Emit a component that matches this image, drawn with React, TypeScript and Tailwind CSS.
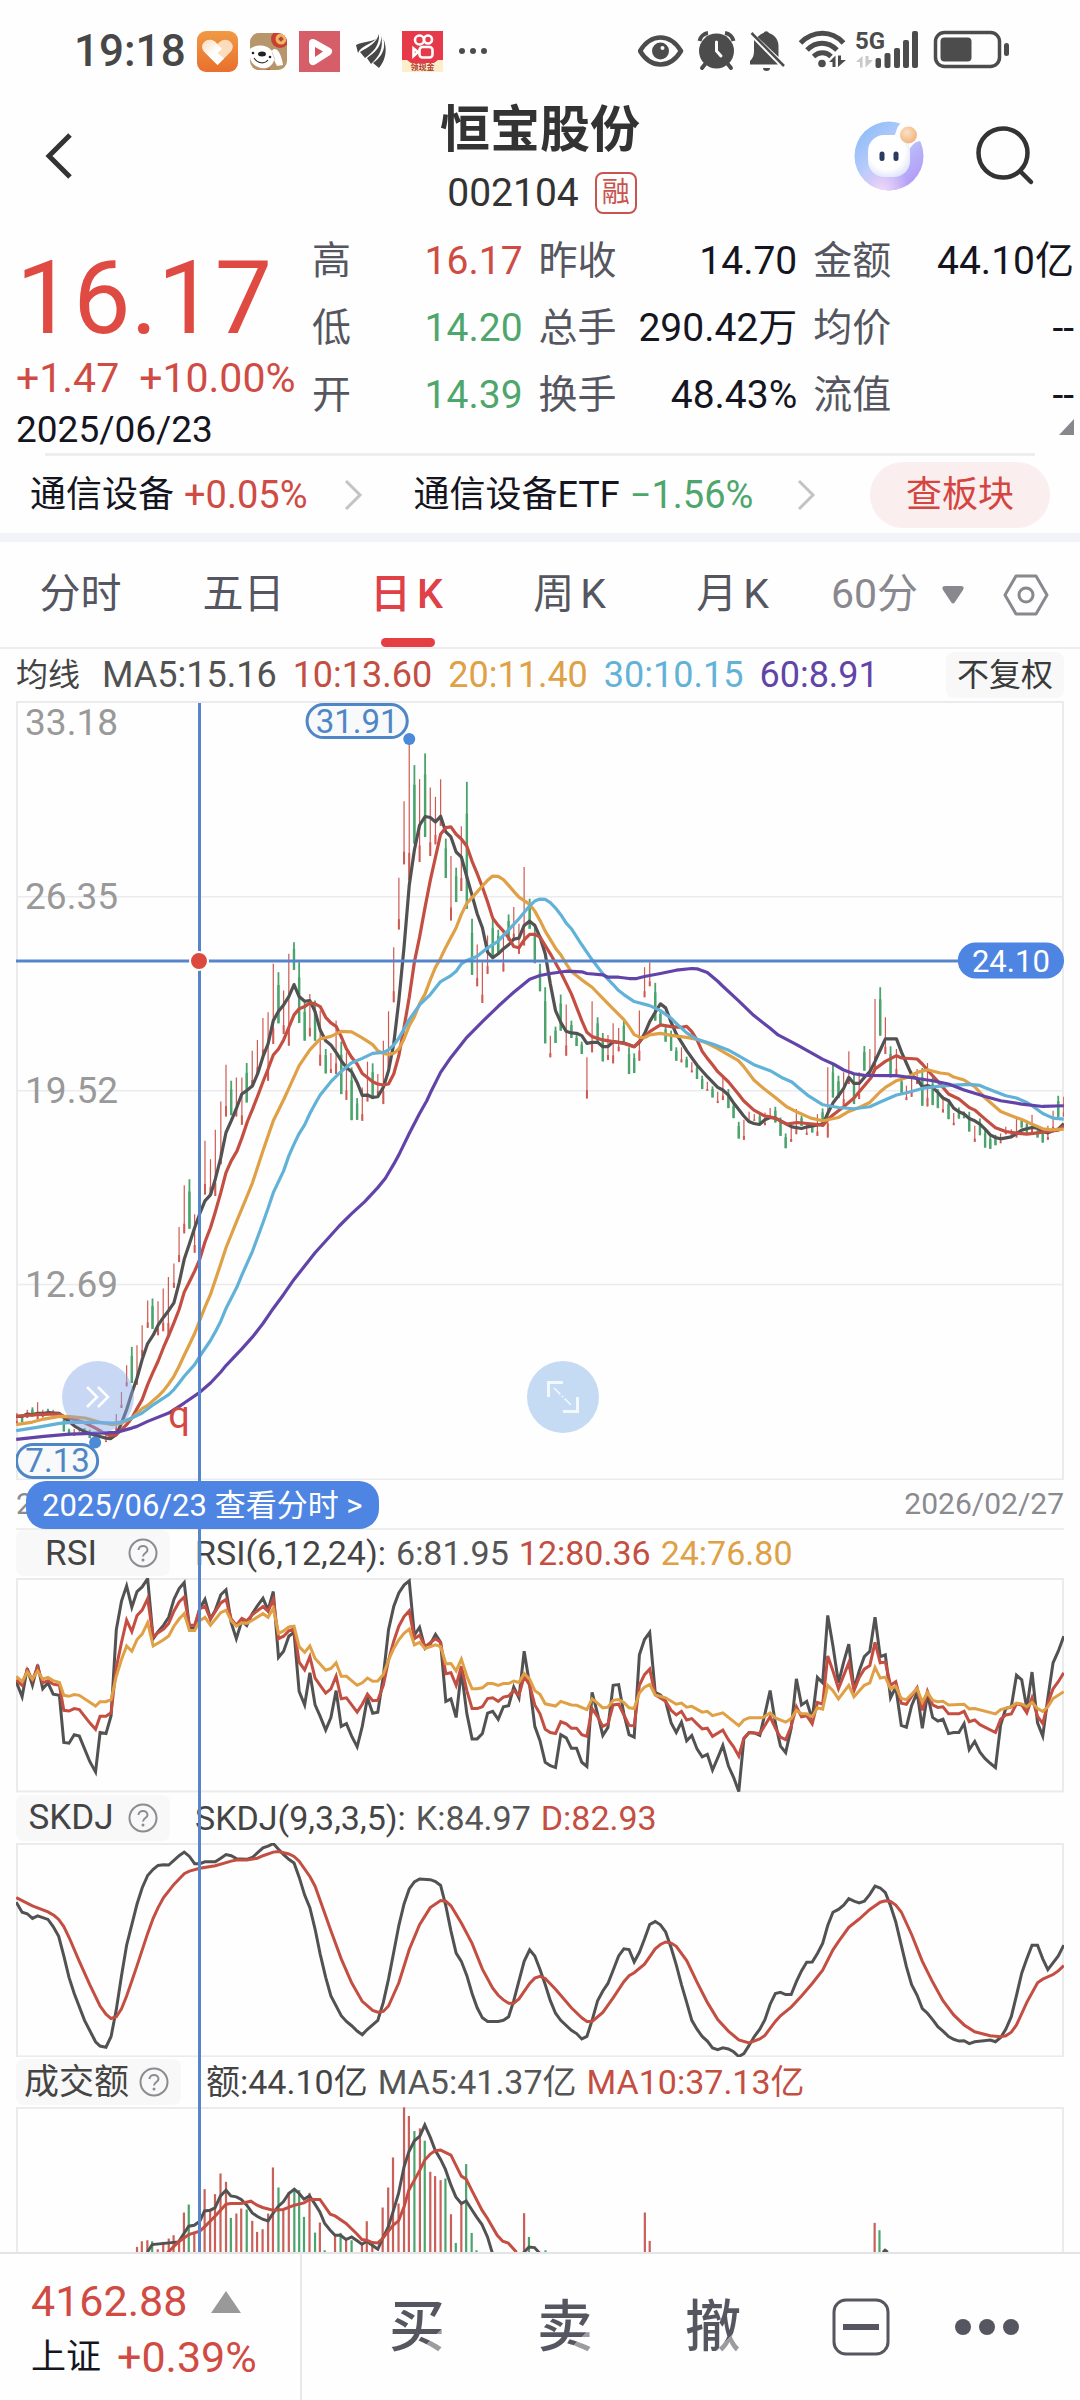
import React from "react";

/* ---------- chart data ----------
   Each series is stored as two half-width strips of "x,y" pairs. */

const HALF = 540;
const SX = 2.9037;

type Strip = { half: 0 | 1; dy?: number; pts: string };

const toPoints = (strips: Strip[], sy: number, sx = SX) =>
  strips
    .map(({ half, dy = 0, pts }) =>
      pts
        .trim()
        .split(/\s+/)
        .map((p) => {
          const [x, y] = p.split(",").map(Number);
          return `${(half * HALF + x / sx).toFixed(1)},${((y + dy) / sy).toFixed(1)}`;
        })
        .join(" ")
    )
    .join(" ");

const DARK = "#525252";
const RED = "#c34e41";
const ORANGE = "#dfa046";
const BLUE = "#62b2d8";
const PURPLE = "#6244a8";
const LOW = 1230;

const movingAverages: { color: string; strips: Strip[] }[] = [
  {
    color: DARK,
    strips: [
      { half: 0, dy: LOW, pts: "50,945 67,945 82,938 97,940 112,936 130,936 145,934 160,935 175,936 190,950 205,962 220,975 235,983 250,991 265,997 280,1002 295,1006 310,1010 323,1012 340,1000 355,965 370,925 385,875 400,830 415,775 431,727 447,702 461,672 477,648 492,628 507,605 522,545 537,475 552,428 567,380 582,338 597,300 613,282 627,235 643,170 658,95 673,60 690,18" },
      { half: 0, pts: "704,1210 720,1198 735,1185 750,1148 765,1098 780,1060 795,990 810,962 825,943 840,918 855,882 870,918 886,932 901,930 916,963 931,1018 947,1050 962,1063 977,1085 992,1110 1007,1130 1022,1143 1038,1175 1053,1214 1068,1213 1083,1220 1098,1218 1114,1190 1129,1140 1144,1060 1159,930 1174,770 1189,585 1204,480 1219,405 1235,379 1250,382 1265,395 1280,378 1295,425 1310,440 1325,485 1340,500 1356,560 1371,615 1386,670 1401,712 1416,785 1431,802 1447,790 1462,775 1477,763 1492,746 1507,743 1522,705 1538,692 1553,705" },
      { half: 1, pts: "0,740 15,790 30,880 45,960 60,995 76,1022 91,1027 106,1028 121,1035 136,1058 151,1055 167,1055 182,1068 197,1068 212,1053 228,1055 243,1057 258,1062 273,1068 288,1055 303,1030 318,993 334,965 349,940 364,952 380,995 395,1030 425,1080 455,1123 485,1158 515,1190 530,1198 546,1213 560,1235 575,1255 590,1275 605,1292 620,1298 636,1301 652,1287 667,1280 682,1282 697,1290 715,1300 730,1308 758,1313 775,1308 805,1302 820,1300 835,1265 850,1235 865,1215 880,1193 895,1160 910,1178 925,1178 940,1160 956,1143 971,1112 986,1078 1001,1045 1033,1045 1048,1085 1063,1120 1078,1155 1093,1165 1108,1188 1123,1184 1138,1190 1153,1205 1168,1222 1184,1230 1199,1252 1214,1263 1229,1270 1244,1283 1260,1290 1275,1300 1290,1315 1305,1332 1320,1340 1335,1344 1366,1338 1381,1328 1396,1318 1411,1314 1426,1310 1442,1312 1457,1322 1472,1326 1487,1320 1502,1315 1518,1298" },
    ],
  },
  {
    color: RED,
    strips: [
      { half: 0, dy: LOW, pts: "50,945 82,942 112,940 145,938 175,938 190,946 220,955 250,965 280,980 300,992 323,1003 340,1000 355,985 370,970 385,950 400,922 415,895 431,850 447,812 461,780 477,738 492,703 507,665 522,625 537,573 552,542 567,510 582,475 597,423 613,380 627,333 643,275 658,215 673,180 690,150 704,112 720,62 735,25" },
      { half: 0, pts: "750,1215 765,1173 780,1135 795,1093 810,1075 825,1048 840,1010 855,973 870,955 886,948 901,937 916,940 931,948 947,980 962,997 977,1007 992,1038 1007,1075 1022,1100 1038,1120 1053,1148 1068,1160 1083,1173 1098,1180 1114,1183 1129,1180 1144,1150 1159,1095 1174,1010 1189,920 1204,815 1219,740 1235,650 1250,570 1265,500 1280,432 1295,412 1310,410 1325,432 1340,446 1356,468 1371,513 1386,550 1401,590 1416,635 1431,683 1447,705 1462,722 1477,742 1492,768 1507,772 1522,748 1538,732 1553,732" },
      { half: 1, pts: "0,740 30,790 60,845 91,910 121,990 136,1025 151,1038 182,1048 212,1053 243,1058 273,1068 288,1052 318,1023 349,1003 380,1008 410,1010 425,1007 440,1023 455,1048 470,1082 485,1103 500,1122 515,1143 546,1173 575,1210 590,1230 620,1258 650,1275 682,1282 715,1300 745,1295 775,1298 805,1301 820,1304 835,1285 850,1272 880,1248 910,1222 940,1185 960,1160 971,1135 1001,1112 1033,1095 1048,1102 1093,1105 1108,1120 1123,1138 1138,1155 1153,1172 1184,1210 1214,1225 1244,1250 1260,1258 1290,1285 1320,1311 1350,1322 1381,1327 1411,1330 1442,1326 1472,1322 1502,1318 1518,1305" },
    ],
  },
  {
    color: ORANGE,
    strips: [
      { half: 0, dy: LOW, pts: "50,970 97,962 130,953 175,945 205,946 250,950 290,962 330,970 355,965 385,950 415,922 431,912 461,885 477,868 492,848 507,825 522,795 537,762 552,730 567,697 582,658 597,618 613,580 643,488 658,440 690,358 720,283 735,245 765,150 795,60 825,-3" },
      { half: 0, pts: "840,1193 870,1125 901,1078 931,1045 962,1037 992,1022 1022,1024 1053,1042 1083,1062 1098,1080 1114,1088 1129,1091 1144,1088 1159,1075 1174,1045 1189,1005 1204,978 1219,940 1235,910 1250,868 1265,830 1280,803 1295,770 1325,712 1340,672 1356,638 1371,622 1401,587 1416,570 1431,557 1447,558 1462,568 1477,585 1492,603 1507,620 1538,642 1553,662" },
      { half: 1, pts: "0,690 15,722 45,773 60,793 76,820 91,843 121,868 151,890 182,923 212,955 243,987 258,1008 273,1032 290,1040 303,1041 318,1033 349,1028 380,1034 425,1040 455,1046 485,1058 515,1074 545,1092 575,1110 590,1127 620,1168 650,1195 682,1220 715,1248 745,1264 785,1282 820,1290 865,1280 895,1262 925,1250 956,1235 986,1203 1001,1190 1033,1170 1063,1160 1093,1145 1123,1137 1160,1147 1184,1150 1199,1159 1229,1168 1244,1178 1260,1188 1275,1205 1290,1222 1335,1262 1366,1275 1396,1286 1426,1300 1457,1314 1480,1317 1518,1315" },
    ],
  },
  {
    color: BLUE,
    strips: [
      { half: 0, dy: LOW, pts: "50,988 110,978 175,966 220,962 265,963 330,965 355,962 385,950 415,935 450,908 492,880 507,865 522,845 537,825 567,790 582,765 613,718 627,692 643,660 658,622 690,557 704,522 735,450 765,365 780,322 795,275 825,210 840,165 855,130 870,98 886,72 901,38 920,2" },
      { half: 0, pts: "931,1213 962,1173 992,1142 1022,1116 1053,1103 1083,1088 1114,1085 1129,1078 1144,1063 1159,1043 1189,987 1219,943 1250,912 1280,873 1310,855 1325,842 1340,820 1356,810 1386,797 1416,772 1447,752 1462,735 1492,702 1507,685 1538,646 1553,632" },
      { half: 1, pts: "0,626 15,627 30,637 45,653 60,673 76,698 91,715 121,763 151,808 182,850 212,882 228,900 243,912 273,933 318,945 349,960 380,983 395,998 425,1027 455,1046 500,1060 545,1078 575,1095 620,1122 667,1140 700,1160 730,1174 745,1187 775,1213 820,1242 865,1250 910,1254 956,1248 986,1234 1033,1213 1063,1206 1108,1193 1153,1187 1199,1183 1244,1181 1275,1184 1290,1191 1350,1215 1381,1222 1411,1235 1426,1245 1457,1268 1487,1282 1518,1285" },
    ],
  },
  {
    color: PURPLE,
    strips: [
      { half: 0, dy: LOW, pts: "50,1014 130,1005 205,998 290,995 340,993 385,980 400,975 431,960 492,935 537,905 582,873 613,845 643,812 658,793 704,743 735,707 765,667 795,622 825,580 855,535 886,495 916,455 947,420 986,375 1022,338 1060,302 1098,260 1120,232 1144,190 1159,162 1189,98 1219,38 1240,0" },
      { half: 0, pts: "1250,1207 1280,1145 1310,1100 1356,1040 1401,993 1447,947 1492,905 1538,866" },
      { half: 1, pts: "0,855 30,849 76,842 121,844 136,849 182,853 197,860 228,860 258,864 280,864 303,858 349,849 395,839 440,834 455,835 485,846 515,872 530,887 575,930 620,975 667,1013 690,1033 745,1063 820,1106 850,1120 880,1138 910,1149 940,1154 1033,1155 1078,1161 1138,1170 1184,1180 1229,1198 1290,1217 1335,1230 1396,1240 1457,1247 1518,1245" },
    ],
  },
];

const candleStrips: Strip[] = [
  { half: 0, dy: LOW, pts: "52,935,965,r 67,940,963,g 82,925,950,r 97,918,945,g 112,903,955,r 127,925,948,r 142,922,940,g 157,925,940,r 188,945,990,g 203,982,1002,g 218,983,1003,r 233,978,990,r 248,980,998,g 263,985,1010,g 278,992,1005,r 310,1000,1022,r 325,995,1015,r 340,938,990,r 355,872,920,r 370,792,855,r 385,737,845,g 400,732,850,r 415,672,765,r 431,598,680,r 445,592,683,g 461,600,702,r 476,562,690,r 491,528,700,r 507,487,560,r 522,378,483,r 537,253,397,r 552,235,383,g 567,340,455,r" },
  { half: 0, pts: "597,1350,1511,r 613,1405,1510,r 627,1317,1515,r 643,1232,1420,r 658,1122,1277,r 673,1170,1273,g 688,1160,1277,r 704,1160,1302,r 718,1117,1235,g 734,1080,1190,r 749,1048,1150,r 765,982,1100,r 780,965,1170,r 795,820,1060,r 810,845,998,g 825,900,1030,r 840,790,1065,r 855,755,838,g 870,815,997,g 886,935,1050,g 901,910,1037,r 916,930,1050,g 931,960,1125,r 947,1075,1148,g 962,1087,1147,r 977,990,1150,r 992,1053,1210,g 1007,1085,1227,r 1022,1130,1288,g 1038,1222,1287,g 1053,1190,1290,r 1068,1113,1232,r 1083,1118,1225,g 1098,1150,1213,r 1114,1050,1240,r 1129,962,1130,r 1144,770,935,r 1159,562,717,r 1174,333,522,r 1189,160,570,r 1204,225,460,g 1219,267,515,r 1235,190,440,g 1250,292,497,r 1265,320,462,r 1280,267,407,r 1295,445,563,g 1310,497,690,r 1325,532,635,g 1340,408,602,r 1356,275,655,g 1371,685,853,g 1386,762,887,r 1401,815,937,r 1416,735,850,r 1431,685,800,g 1447,718,790,g 1462,720,843,r 1477,672,750,g 1492,650,750,r 1507,700,790,r 1522,530,765,r 1538,625,715,g 1553,700,818,g 1568,820,902,g" },
  { half: 1, pts: "15,890,1058,g 30,1035,1100,r 45,1008,1057,g 60,912,1020,g 76,942,1095,r 91,990,1042,g 106,1033,1066,g 121,1053,1090,g 136,1100,1223,r 151,932,1085,r 167,980,1052,g 182,1027,1112,g 197,1033,1108,r 212,998,1118,r 228,1012,1082,r 243,990,1055,g 258,1070,1150,g 273,1088,1147,g 288,960,1110,r 303,830,920,r 318,815,887,r 334,877,990,g 349,960,1000,g 364,1005,1053,g 380,1020,1080,g 395,1070,1110,g 410,1070,1115,r 425,1098,1130,g 440,1115,1145,r 455,1120,1165,g 470,1155,1195,g 485,1173,1200,r 500,1187,1220,g 515,1203,1237,r 530,1160,1228,r 546,1195,1252,g 561,1235,1282,g 576,1293,1343,g 591,1287,1347,r 606,1263,1292,r 621,1270,1290,r 637,1270,1300,g 652,1265,1303,r 667,1252,1280,r 682,1248,1295,g 697,1280,1335,g 712,1328,1372,g 728,1310,1353,r 743,1255,1330,r 758,1275,1305,g 773,1300,1332,r 789,1303,1325,g 804,1270,1335,r 819,1253,1300,g 834,1130,1340,r 849,1120,1220,g 865,1155,1222,g 880,1145,1245,r 895,1082,1180,r 910,1150,1240,g 925,1145,1225,r 940,1066,1140,g 956,1075,1150,r 971,925,1140,r 986,890,1035,g 1001,980,1090,r 1016,1067,1160,g 1033,1075,1150,r 1048,1160,1210,g 1062,1185,1228,r 1077,1140,1218,r 1093,1135,1180,r 1108,1132,1245,g 1123,1117,1247,r 1138,1160,1243,g 1153,1195,1252,g 1168,1215,1265,r 1184,1225,1285,g 1199,1267,1303,r 1214,1250,1283,g 1229,1262,1282,g 1244,1263,1322,g 1260,1305,1353,r 1275,1283,1333,g 1290,1315,1370,g 1305,1335,1374,g 1320,1332,1363,g 1335,1328,1357,r 1350,1308,1330,r 1366,1315,1335,r 1381,1282,1340,r 1396,1285,1310,g 1411,1290,1330,g 1426,1272,1325,r 1442,1315,1340,g 1457,1320,1355,g 1472,1305,1347,r 1487,1260,1320,r 1502,1215,1278,g 1518,1218,1277,r" },
];

const candles = candleStrips.flatMap(({ half, dy = 0, pts }) =>
  pts.split(" ").map((c) => {
    const [x, hi, lo, dir] = c.split(",");
    return {
      x: half * HALF + Number(x) / SX,
      hi: (Number(hi) + dy) / 3,
      lo: (Number(lo) + dy) / 3,
      up: dir === "r",
    };
  })
);

const rsi: { color: string; strips: Strip[] }[] = [
  {
    color: DARK,
    strips: [
      { half: 0, pts: "50,455 67,497 82,418 97,465 112,408 127,475 142,458 157,490 175,493 188,625 203,627 218,603 233,607 263,678 280,707 293,597 310,600 325,550 340,310 355,230 370,187 385,247 400,203 415,190 431,167 447,335 461,315 477,297 492,275 507,225 522,195 537,178 552,305 567,305 582,250 597,225 613,280 627,255 643,212 658,198 673,290 688,335 704,285 718,298 734,265 749,243 765,222 780,255 795,203 810,387 825,370 840,328 855,317 870,482 886,520 901,430 916,520 931,552 947,590 962,555 977,480 992,580 1007,572 1022,607 1038,637 1053,580 1068,500 1083,543 1098,540 1114,440 1129,310 1144,245 1159,207 1174,185 1189,173 1204,325 1219,303 1235,362 1250,350 1265,323 1280,345 1295,510 1310,503 1325,555 1340,425 1356,545 1371,615 1386,615 1401,600 1416,543 1431,538 1447,560 1462,525 1477,522 1492,470 1507,500 1522,370 1538,465 1553,580" },
      { half: 1, pts: "0,620 15,680 30,690 45,695 60,603 76,612 91,641 106,641 121,680 136,692 151,485 167,545 182,605 197,583 212,465 228,463 243,545 258,603 273,610 288,380 303,337 318,317 334,485 349,492 364,510 380,570 395,597 410,568 425,620 440,605 455,643 470,665 485,658 500,702 515,668 530,633 546,690 561,722 576,762 591,615 606,597 621,598 637,605 652,545 667,480 682,570 697,635 712,653 728,585 743,447 758,520 773,510 789,560 804,443 819,458 834,270 849,355 865,458 880,400 895,350 910,475 925,425 940,385 956,370 971,275 986,385 1001,380 1016,500 1031,470 1047,577 1062,582 1077,522 1093,485 1108,585 1123,490 1138,555 1153,565 1168,560 1184,600 1199,597 1214,597 1229,572 1244,645 1260,622 1275,652 1290,670 1305,683 1320,695 1335,575 1350,530 1366,525 1381,437 1396,450 1411,530 1426,428 1442,570 1457,607 1472,500 1487,402 1502,370 1518,328" },
    ],
  },
  {
    color: RED,
    strips: [
      { half: 0, pts: "50,450 67,465 82,422 97,450 112,415 127,458 142,452 157,462 175,465 188,535 203,537 218,530 233,533 263,570 280,588 293,552 310,552 325,542 340,415 355,345 370,283 385,315 400,270 415,255 431,223 447,330 461,318 477,308 492,292 507,258 522,232 537,218 552,297 567,297 582,252 597,243 613,280 643,235 658,225 673,280 688,297 704,278 718,285 734,268 765,245 780,258 795,225 810,335 825,328 840,313 855,308 870,400 886,422 901,385 916,445 931,465 947,487 962,475 977,440 992,503 1007,500 1038,540 1053,518 1068,490 1083,508 1098,507 1114,465 1129,395 1144,342 1159,300 1174,273 1189,257 1204,335 1219,325 1235,357 1265,335 1280,345 1295,433 1310,430 1325,465 1340,412 1356,480 1371,530 1386,530 1401,525 1416,502 1431,500 1447,510 1462,498 1477,495 1492,480 1507,493 1522,440 1538,465 1553,520" },
      { half: 1, pts: "0,545 15,588 30,597 45,600 60,567 76,573 91,585 106,585 121,603 136,608 151,530 167,553 182,580 197,573 212,520 228,518 243,548 258,577 273,578 288,465 303,435 318,420 334,492 364,510 380,535 395,548 410,538 425,562 440,558 455,573 470,587 485,585 500,608 530,590 546,617 561,637 576,663 591,612 606,597 621,598 637,600 667,553 682,585 697,610 712,617 728,580 743,525 758,553 773,550 789,573 804,513 819,518 834,383 849,425 865,475 895,402 910,480 925,443 940,420 956,410 971,345 986,402 1001,400 1016,465 1031,455 1047,515 1062,518 1093,472 1108,535 1123,482 1138,520 1153,527 1168,525 1184,545 1214,545 1229,538 1244,567 1260,562 1275,575 1320,597 1335,560 1350,548 1366,545 1381,517 1396,520 1411,542 1426,500 1442,552 1457,572 1472,515 1487,475 1502,455 1518,430" },
    ],
  },
  {
    color: ORANGE,
    strips: [
      { half: 0, pts: "50,440 67,455 82,428 97,448 112,425 127,448 142,443 157,452 175,457 188,493 203,496 218,491 233,493 280,523 293,511 310,511 325,505 340,440 355,393 370,355 385,370 400,337 415,322 431,290 447,355 477,338 492,327 507,300 522,280 537,265 552,312 567,312 582,285 597,275 613,297 643,262 658,255 673,285 688,300 704,290 718,292 734,283 765,265 780,275 795,250 810,320 825,313 840,302 855,300 870,357 886,373 901,355 916,390 947,423 962,418 977,402 992,440 1007,440 1038,465 1053,458 1068,445 1083,454 1098,453 1114,435 1129,395 1144,362 1159,338 1174,320 1189,308 1204,352 1219,345 1235,362 1265,352 1280,357 1295,405 1310,404 1325,425 1340,392 1356,440 1371,475 1386,475 1401,472 1416,460 1431,460 1447,465 1462,460 1477,460 1492,453 1507,457 1522,432 1538,448 1553,480" },
      { half: 1, pts: "0,490 15,517 45,523 60,510 91,520 106,521 136,533 151,503 167,515 182,528 197,526 212,507 228,505 243,513 258,528 273,530 288,487 303,470 318,463 334,492 364,500 395,518 410,515 425,526 440,524 470,540 485,538 500,550 530,542 576,578 591,562 606,556 645,556 667,542 682,556 712,568 728,558 743,535 758,545 773,545 789,553 804,528 819,532 834,465 849,480 865,503 895,465 910,497 940,465 956,458 971,415 986,445 1001,442 1016,475 1031,468 1047,502 1062,505 1093,475 1108,512 1123,485 1138,507 1153,511 1168,510 1184,520 1229,518 1244,531 1260,530 1320,545 1335,533 1366,525 1381,515 1396,517 1411,525 1426,513 1442,530 1457,538 1472,525 1487,502 1518,483" },
    ],
  },
];

const skdj: { color: string; strips: Strip[] }[] = [
  {
    color: DARK,
    strips: [
      { half: 0, pts: "50,1070 67,1098 82,1102 97,1115 112,1108 142,1118 157,1138 173,1165 188,1220 203,1280 218,1325 248,1400 280,1460 293,1472 310,1475 325,1445 340,1370 355,1275 370,1190 400,1075 415,1030 431,995 447,978 461,967 477,965 492,966 507,953 522,940 537,930 552,942 567,962 582,962 597,957 627,957 643,947 658,937 673,940 688,948 718,950 734,945 749,932 765,918 780,913 795,906 810,922 825,937 840,950 855,960 870,1000 886,1050 901,1085 916,1145 931,1215 947,1280 962,1332 992,1387 1007,1403 1022,1415 1038,1430 1053,1440 1068,1425 1098,1400 1114,1350 1129,1285 1144,1210 1159,1135 1174,1075 1189,1033 1204,1013 1219,1005 1250,1007 1265,1012 1280,1023 1295,1080 1310,1150 1325,1212 1340,1235 1356,1275 1371,1325 1386,1365 1401,1393 1416,1403 1447,1403 1462,1400 1477,1390 1492,1345 1507,1290 1522,1235 1538,1203 1553,1220" },
      { half: 1, pts: "0,1258 15,1300 30,1345 45,1380 60,1400 91,1428 106,1437 121,1452 136,1445 151,1400 167,1345 182,1318 197,1297 212,1260 228,1220 243,1200 258,1202 273,1237 288,1210 303,1173 318,1132 334,1124 349,1133 364,1153 380,1197 395,1245 410,1300 425,1350 440,1400 455,1425 470,1445 485,1458 500,1477 515,1482 530,1477 546,1480 561,1488 576,1501 591,1493 606,1470 621,1445 637,1425 652,1398 667,1355 682,1325 697,1322 712,1328 728,1328 743,1292 758,1262 773,1238 789,1237 804,1213 819,1185 834,1135 849,1098 865,1090 880,1078 895,1060 910,1067 925,1072 940,1067 956,1048 971,1025 986,1030 1001,1043 1016,1080 1031,1125 1047,1190 1062,1250 1077,1300 1093,1330 1108,1367 1123,1380 1138,1398 1153,1418 1168,1430 1184,1445 1199,1453 1214,1458 1229,1457 1244,1465 1260,1460 1305,1455 1320,1460 1335,1448 1350,1425 1366,1390 1381,1330 1396,1268 1411,1228 1426,1190 1442,1190 1457,1228 1472,1258 1502,1220 1518,1190" },
    ],
  },
  {
    color: RED,
    strips: [
      { half: 0, pts: "50,1057 97,1080 142,1097 160,1107 173,1118 188,1138 203,1168 233,1235 263,1300 293,1360 310,1383 325,1395 340,1390 355,1368 370,1332 385,1290 400,1247 431,1157 447,1115 461,1085 477,1057 507,1020 537,990 552,983 582,975 627,968 673,955 688,952 718,952 749,947 765,940 795,930 810,928 840,935 855,942 870,955 901,998 916,1025 931,1065 962,1150 992,1228 1022,1295 1053,1347 1083,1372 1098,1377 1114,1375 1129,1360 1159,1295 1189,1202 1219,1133 1250,1085 1280,1065 1295,1067 1310,1080 1340,1128 1371,1185 1401,1257 1431,1310 1447,1330 1462,1343 1477,1352 1492,1352 1507,1340 1538,1297 1553,1282" },
      { half: 1, pts: "0,1277 15,1283 45,1313 91,1365 121,1393 136,1403 151,1403 182,1378 212,1337 243,1292 258,1275 273,1267 303,1243 334,1200 349,1188 364,1181 380,1184 395,1193 425,1233 455,1293 485,1350 515,1398 546,1430 576,1455 606,1463 637,1452 652,1442 682,1403 697,1387 728,1363 758,1332 789,1297 819,1260 849,1203 865,1180 895,1140 925,1117 956,1090 986,1070 1001,1066 1016,1068 1031,1078 1047,1097 1077,1160 1108,1235 1138,1293 1168,1345 1199,1385 1229,1413 1260,1432 1305,1443 1335,1446 1350,1443 1366,1433 1381,1413 1411,1350 1442,1295 1457,1285 1487,1272 1502,1262 1518,1247" },
    ],
  },
];

const VX = 1.4519;
const volumeBars =
  "200,590,r 207,573,r 215,570,r 222,573,g 230,597,r 238,575,r 246,565,r 253,555,r 261,575,r 268,487,r 275,463,g 283,545,r 298,417,r 306,480,r 313,432,r 321,370,r 329,395,r 336,503,g 344,490,r 351,475,r 359,478,g 367,512,r 374,545,r 382,537,r 390,490,r 397,352,r 405,412,g 412,480,r 420,425,r 428,418,g 435,420,g 442,500,g 450,428,r 458,547,g 465,517,r 472,600,g 487,555,r 495,548,g 503,570,r 511,570,g 526,580,r 533,513,r 541,577,r 556,472,r 564,412,r 571,322,r 579,460,r 587,172,r 594,198,r 602,243,g 610,235,r 617,272,g 625,365,r 632,378,r 640,390,r 647,385,g 655,492,r 662,578,g 670,463,r 677,342,g 685,548,g 692,600,g 761,489,r 768,560,g 792,600,g 936,487,r 943,572,r 1269,518,r 1276,540,g"
    .split(" ")
    .map((b) => {
      const [x, top, dir] = b.split(",");
      return { x: Number(x) / VX, top: Number(top) / 3, up: dir === "r" };
    });

const volumeLines: { color: string; pts: string }[] = [
  { color: DARK, pts: "215,605 222,583 260,575 268,550 275,528 283,525 291,513 298,482 306,480 313,473 321,437 329,420 336,437 344,440 351,448 359,465 367,488 374,498 382,507 390,512 397,490 405,468 412,455 420,430 428,417 435,430 442,447 450,437 458,462 465,485 472,520 480,540 487,555 495,555 503,568 511,560 518,570 526,582 533,573 541,585 549,597 556,565 564,530 571,485 579,430 587,350 594,305 602,272 610,258 617,225 625,262 632,300 640,328 647,358 655,405 662,440 670,460 677,452 685,478 692,500 700,523 708,560 716,615" },
  { color: DARK, pts: "758,612 768,590 776,592 784,610" },
  { color: DARK, pts: "1281,606 1284,600 1288,606" },
  { color: RED, pts: "242,612 260,575 275,553 291,543 298,530 313,498 321,480 329,462 336,460 351,460 365,453 374,465 382,472 397,480 412,478 428,465 442,458 450,448 465,448 480,492 487,497 503,520 518,550 526,568 533,570 541,577 549,578 556,565 571,525 579,512 587,470 594,420 602,390 610,360 617,330 625,312 632,302 640,300 655,315 662,345 670,378 677,387 685,420 700,480 708,505 722,555 730,573 738,578 750,606" },
];

/* ---------- icons ---------- */

function HeartApp() {
  return (
    <svg className="h-[41px] w-[41px]" viewBox="0 0 41 41" aria-label="健康">
      <defs>
        <linearGradient id="ha" x1="0" y1="0" x2="0" y2="1">
          <stop offset="0" stopColor="#f09a45" />
          <stop offset="1" stopColor="#e96f2d" />
        </linearGradient>
        <linearGradient id="hb" x1="0" y1="0" x2="0.7" y2="1">
          <stop offset="0" stopColor="#fbd9b8" />
          <stop offset="0.6" stopColor="#fff" />
        </linearGradient>
      </defs>
      <rect width="41" height="41" rx="9" fill="url(#ha)" />
      <path d="M20.500 34 L7.500 21 C4.500 17.500 4.500 13.500 7.500 11 C10.500 8 15 8 18 10.800 L20.500 13 L23 10.800 C26 8 30.500 8 33.500 11 C36.500 13.500 36.500 17.500 33.500 21 Z" fill="#fbdcbd" />
      <path d="M20.500 34 L7.500 21 C4.500 17.500 4.500 13.500 7.500 11 C10.500 8 15 8 18 10.800 L25 18 L20.500 22 L27 27.500 Z" fill="url(#hb)" />
    </svg>
  );
}

function DogApp() {
  return (
    <svg className="h-[37px] w-[37px]" viewBox="0 0 37 37" aria-label="购物">
      <defs>
        <clipPath id="dogc"><rect width="37" height="37" rx="9" /></clipPath>
      </defs>
      <g clipPath="url(#dogc)">
        <rect width="37" height="37" fill="#b8966c" />
        <circle cx="30" cy="6" r="9" fill="#c8402f" />
        <circle cx="31" cy="6" r="5.500" fill="#f0b465" />
        <rect x="29" y="4" width="4" height="4" fill="#b5452c" transform="rotate(45 31 6)" />
        <path d="M0 16 C5 11 17 11 22 18 C25 13 31 18 33 32 L27 33 L24 27 C22 35 14 37 8 34 C3 32 0 28 0 24 Z" fill="#fff" />
        <path d="M22 19 L25 27" stroke="#d9cfc4" strokeWidth="1" />
        <ellipse cx="12" cy="21" rx="4" ry="2.500" fill="#222" />
        <circle cx="3" cy="20" r="1.300" fill="#222" />
        <circle cx="20" cy="24" r="1.300" fill="#222" />
        <path d="M4 25 C8 31 15 31 18 27" fill="none" stroke="#333" strokeWidth="1.200" />
        <path d="M0 33 C6 38 16 38 20 35 V37 H0 Z" fill="#d8513f" />
      </g>
    </svg>
  );
}

function PlayApp() {
  return (
    <svg className="h-[41px] w-[41px]" viewBox="0 0 41 41" aria-label="视频">
      <rect width="41" height="41" fill="#d65e68" />
      <path d="M14 12 L29 20.500 L14 30 Z" fill="none" stroke="#fff" strokeWidth="8" strokeLinejoin="round" />
      <path d="M16 16 L24 20.500 L16 26 Z" fill="#d4525e" />
    </svg>
  );
}

function WingApp() {
  return (
    <svg className="h-[34px] w-[30px]" viewBox="0 0 30 34" fill="#474747" aria-label="证券">
      <path d="M0 11 C8 7 12 9 20 5 C14 11 6 11 2 19 Z" />
      <path d="M23 0 C21 8 13 13 4 18 L9 24 C16 19 24 12 23 0 Z" />
      <path d="M25 2 C26 13 18 19 11 24 L15 30 C23 23 28 14 25 2 Z" />
      <path d="M27.500 5 C30 16 25 23 17 29 L23 34 C29 27 32 16 27.500 5 Z" />
    </svg>
  );
}

function CameraApp() {
  return (
    <svg className="h-[41px] w-[41px]" viewBox="0 0 41 41" aria-label="短视频">
      <rect width="41" height="41" fill="#e63a4a" />
      <path d="M0 29 H5 L9 32 H32 L36 29 H41 V41 H0 Z" fill="#fbeecb" />
      <g fill="none" stroke="#fff" strokeWidth="2.600">
        <circle cx="17.500" cy="9" r="4.500" />
        <circle cx="26" cy="8.500" r="4" />
        <rect x="17.500" y="16" width="13" height="10.500" rx="3" />
        <path d="M16 21 L11.500 17.500 V25 Z" />
      </g>
      <text x="20.500" y="39" textAnchor="middle" fontSize="8" fontWeight="700" fill="#b3372f">领现金</text>
    </svg>
  );
}

function StatusRight() {
  return (
    <svg className="h-[62px] w-[372px]" viewBox="638 21 372 62" fill="#4c4c4c" aria-label="系统状态">
      <path d="M640 52 C651 34 670 34 681 52 C670 70 651 70 640 52 Z" fill="none" stroke="#4c4c4c" strokeWidth="4.500" strokeLinejoin="round" />
      <circle cx="660.500" cy="52" r="8.500" />
      <circle cx="662.500" cy="49" r="2" fill="#fff" />
      <circle cx="716.500" cy="52" r="17.500" />
      <path d="M699.500 42 A10 10 0 0 1 708 34" fill="none" stroke="#4c4c4c" strokeWidth="4" />
      <path d="M725 34 A10 10 0 0 1 733.500 42" fill="none" stroke="#4c4c4c" strokeWidth="4" />
      <path d="M706 64 L702 69 M727 64 L731 69" stroke="#4c4c4c" strokeWidth="4" strokeLinecap="round" />
      <path d="M716.500 43 V52 L721 57" fill="none" stroke="#fff" strokeWidth="3" strokeLinecap="round" />
      <path d="M754 41 L778 65.500 H750 V62 C753 59 754 56 754 52 Z" />
      <path d="M757.500 38 C760 35.500 762 34.500 763.500 34 A3 3 0 0 1 769 34 C775 36 778.500 41 778.500 47 V58 Z" />
      <path d="M751.500 34 L784 67" stroke="#4c4c4c" strokeWidth="2.500" />
      <path d="M763 69 H770 A3.500 3 0 0 1 763 69 Z" />
      <g fill="none" stroke="#4c4c4c" strokeWidth="5">
        <path d="M800.500 44 C813 31 832 31 843.500 44" />
        <path d="M807 51 C816 42 828 42 837 51" />
        <path d="M813.500 57.500 C819 52.500 826 52.500 831 57.500" />
      </g>
      <circle cx="822" cy="64.500" r="3.800" />
      <path d="M829 63 L835.500 56.500 V68 H832.500 V63 Z M838 56.500 V68 L846 61 L841 61 V56.500 Z" />
      <text x="855" y="50" fontSize="24" fontWeight="700">5G</text>
      <path d="M856 63 L862.500 57 V68.500 H860 V63 Z M865.500 57 V68.500 L873 61 H868.500 V57 Z" fill="#c8c8c8" />
      <rect x="875.500" y="59" width="5.500" height="10" rx="2" />
      <rect x="884.500" y="54" width="6" height="15" rx="2" />
      <rect x="894" y="49" width="6" height="20" rx="2" />
      <rect x="903" y="41" width="6" height="28" rx="2" />
      <rect x="912" y="32" width="6" height="37" rx="2" />
      <rect x="935.500" y="33.500" width="64" height="34" rx="9" fill="none" stroke="#4c4c4c" strokeWidth="3.500" />
      <rect x="940.500" y="38.500" width="31" height="24" rx="4" />
      <rect x="1004" y="44" width="5" height="13" rx="2.500" />
    </svg>
  );
}

function Assistant() {
  return (
    <svg className="h-[70px] w-[70px]" viewBox="0 0 70 70">
      <defs>
        <linearGradient id="ring" x1="0.1" y1="0.1" x2="0.85" y2="0.9">
          <stop offset="0" stopColor="#8fbcf8" />
          <stop offset="0.45" stopColor="#b8ccfb" />
          <stop offset="1" stopColor="#b59af6" />
        </linearGradient>
        <radialGradient id="pink" cx="0.4" cy="1" r="0.4">
          <stop offset="0" stopColor="#f3d8f8" />
          <stop offset="1" stopColor="#f3d8f8" stopOpacity="0" />
        </radialGradient>
        <radialGradient id="face" cx="0.45" cy="0.4" r="0.7">
          <stop offset="0.6" stopColor="#fff" />
          <stop offset="1" stopColor="#d7dcfa" />
        </radialGradient>
        <radialGradient id="ball" cx="0.4" cy="0.35" r="0.7">
          <stop offset="0" stopColor="#fbe0c4" />
          <stop offset="1" stopColor="#f0b27c" />
        </radialGradient>
      </defs>
      <circle cx="35" cy="35" r="34.500" fill="url(#ring)" />
      <circle cx="35" cy="35" r="34.500" fill="url(#pink)" />
      <path d="M47 2 C42 6 42 14 40 15 C48 16 54 22 55 30 C57 24 62 20 67 20 L70 8 L55 0 Z" fill="#fefefe" />
      <rect x="14" y="14" width="42" height="42" rx="16" fill="url(#face)" />
      <circle cx="54.500" cy="14" r="8.500" fill="url(#ball)" />
      <rect x="25.500" y="30.500" width="5" height="9.500" rx="2.500" fill="#2b3a5e" />
      <rect x="39.500" y="30.500" width="5" height="9.500" rx="2.500" fill="#2b3a5e" />
    </svg>
  );
}

function Chevron() {
  return (
    <svg className="h-8 w-[19px]" viewBox="0 0 19 32" fill="none" stroke="#c3c3c6" strokeWidth="3">
      <path d="M2 2 L16 16 L2 30" />
    </svg>
  );
}

function Help() {
  return (
    <svg className="ml-[2px] h-[30px] w-[30px]" viewBox="0 0 30 30" aria-label="说明">
      <circle cx="15" cy="15" r="13.500" fill="none" stroke="#8b8b90" strokeWidth="2" />
      <path d="M10.500 12 C10.500 6.500 19.500 6.500 19.500 12 C19.500 15 15 15 15 18.500" fill="none" stroke="#8b8b90" strokeWidth="2" />
      <circle cx="15" cy="22" r="1.500" fill="#8b8b90" />
    </svg>
  );
}

/* ---------- sections ---------- */

function StatusBar() {
  return (
    <div className="flex h-[102px] items-center pl-[74px] pr-[70px]">
      <span className="w-[123px] text-[44px] font-medium leading-none text-[#474747]">19:18</span>
      <div className="flex items-center gap-3">
        <HeartApp />
        <DogApp />
        <PlayApp />
        <span className="px-1"><WingApp /></span>
        <CameraApp />
        <svg className="ml-1 h-2 w-7" viewBox="0 0 28 8" fill="#4c4c4c">
          <circle cx="3" cy="4" r="3" />
          <circle cx="14" cy="4" r="3" />
          <circle cx="25" cy="4" r="3" />
        </svg>
      </div>
      <span className="ml-auto"><StatusRight /></span>
    </div>
  );
}

function Header() {
  return (
    <header className="relative flex h-[126px] items-start justify-between pl-[42px] pr-[44px] text-[#333]">
      <button aria-label="返回" className="flex h-[108px] items-center">
        <svg className="h-12 w-8" viewBox="0 0 32 48" fill="none" stroke="#333" strokeWidth="5">
          <path d="M28 3 L7 24 L28 45" />
        </svg>
      </button>
      <div className="absolute inset-x-0 top-0 mx-auto flex w-[280px] flex-col items-center">
        <h1 className="flex h-14 items-center text-[50px] font-bold leading-none">恒宝股份</h1>
        <div className="flex h-[70px] items-center gap-4 pl-1">
          <span className="text-[39px] leading-none">002104</span>
          <span className="flex h-[42px] w-[42px] items-center justify-center rounded-lg border-2 border-[#c9544d] text-[28px] leading-none text-[#c9544d]">融</span>
        </div>
      </div>
      <div className="flex h-[108px] items-center gap-[50px]">
        <button aria-label="智能助手"><Assistant /></button>
        <button aria-label="搜索">
          <svg className="h-[62px] w-[62px]" viewBox="0 0 62 62" fill="none" stroke="#333" strokeWidth="4.500" strokeLinecap="round">
            <circle cx="29" cy="28" r="24.500" />
            <path d="M47 47 L57 57" />
          </svg>
        </button>
      </div>
    </header>
  );
}

const quotes = [
  [["高", "16.17", "text-[#cf4b43]"], ["低", "14.20", "text-[#4fa66c]"], ["开", "14.39", "text-[#4fa66c]"]],
  [["昨收", "14.70", "text-[#15151f]"], ["总手", "290.42万", "text-[#15151f]"], ["换手", "48.43%", "text-[#15151f]"]],
  [["金额", "44.10亿", "text-[#15151f]"], ["均价", "--", "text-[#15151f]"], ["流值", "--", "text-[#15151f]"]],
];

function Quote() {
  return (
    <section className="relative flex h-[226px]">
      <div className="w-[312px] shrink-0 whitespace-nowrap pl-4 pt-3 text-[#cf4b43]">
        <div className="flex h-[116px] items-center text-[102px] leading-none text-[#df4b42]">16.17</div>
        <div className="flex h-11 items-center gap-5 text-[41px] leading-none">
          <span>+1.47</span>
          <span>+10.00%</span>
        </div>
        <div className="flex h-[54px] items-center pt-1 text-[37px] leading-none text-[#15151f]">2025/06/23</div>
      </div>
      <div className="grid flex-1 grid-cols-[210fr_258fr_260fr] gap-x-4 pr-[6px]">
        {quotes.map((col, i) => (
          <dl key={i}>
            {col.map(([label, value, tone]) => (
              <div key={label} className="flex h-[67px] items-center justify-between whitespace-nowrap text-[39px] leading-none">
                <dt className="text-[#55565f]">{label}</dt>
                <dd className={tone}>{value}</dd>
              </div>
            ))}
          </dl>
        ))}
      </div>
      <svg className="absolute bottom-[19px] right-[6px] h-4 w-[15px]" viewBox="0 0 15 16" fill="#88888c">
        <path d="M15 0 V16 H0 Z" />
      </svg>
    </section>
  );
}

function Sectors() {
  return (
    <section className="flex h-[77px] items-center whitespace-nowrap pl-[30px] pr-[30px] text-[36px] leading-none text-[#15151f]">
      <a href="#sector" className="flex items-center gap-[10px]">
        通信设备<span className="text-[38px] text-[#cf4b43]">+0.05%</span>
      </a>
      <span className="ml-9"><Chevron /></span>
      <a href="#etf" className="ml-[51px] flex items-center gap-[10px]">
        通信设备ETF<span className="text-[38px] text-[#4fa66c]">−1.56%</span>
      </a>
      <span className="ml-[44px]"><Chevron /></span>
      <button className="ml-auto h-[66px] w-[180px] rounded-full bg-[#fbeeee] text-[#d5453f]">查板块</button>
    </section>
  );
}

const tabs = ["分时", "五日", "日K", "周K", "月K"];

function Tabs() {
  return (
    <nav className="grid h-[107px] grid-cols-[163fr_163fr_163fr_163fr_163fr_265fr] border-b-2 border-[#ededf0] text-[41px] leading-none text-[#55565f]">
      {tabs.map((t) => {
        const active = t === "日K";
        return (
          <button key={t} className={active ? "relative pr-[2px] font-medium text-[#e04048]" : "relative pr-[2px]"}>
            {t.endsWith("K") ? (<>{t[0]}<span className="ml-[6px]">K</span></>) : t}
            {active && <span className="absolute bottom-0 left-1/2 h-[9px] w-[54px] -translate-x-1/2 rounded-full bg-[#e33f45]" />}
          </button>
        );
      })}
      <div className="flex items-center justify-between pl-4 pr-[31px] text-[#88888e]">
        <button className="flex items-center gap-6 whitespace-nowrap">
          60分
          <svg className="h-[18px] w-[22px]" viewBox="0 0 22 18" fill="#88888e">
            <path d="M3 0 H19 Q23 0 21 4 L13 16 Q11 19 9 16 L1 4 Q-1 0 3 0 Z" />
          </svg>
        </button>
        <button aria-label="设置">
          <svg className="h-11 w-[46px]" viewBox="0 0 46 44" fill="none" stroke="#88888e" strokeWidth="3" strokeLinejoin="round">
            <path d="M13 3 H33 L44 22 L33 41 H13 L2 22 Z" />
            <circle cx="23" cy="22" r="7" />
          </svg>
        </button>
      </div>
    </nav>
  );
}

function Averages() {
  return (
    <div className="flex h-[52px] items-center gap-4 whitespace-nowrap text-[36px] leading-none">
      <span className="mr-[6px] text-[32px] text-[#444]">均线</span>
      <span className="text-[#525252]">MA5:15.16</span>
      <span className="text-[#c34e41]">10:13.60</span>
      <span className="text-[#dfa046]">20:11.40</span>
      <span className="text-[#62b2d8]">30:10.15</span>
      <span className="text-[#6244a8]">60:8.91</span>
      <button className="ml-auto h-[46px] w-[118px] rounded-lg bg-[#f8f8f8] text-[32px] text-[#3a3a3a]">不复权</button>
    </div>
  );
}

function PriceChart() {
  return (
    <div className="relative">
      <svg className="block h-auto w-full" viewBox="17 11 1046 778" role="img" aria-label="日K线图">
        <rect x="18" y="12" width="1044" height="776" fill="none" stroke="#ebebed" strokeWidth="2" />
        <path d="M17 206.500 H1063 M17 400 H1063 M17 593.500 H1063" stroke="#ebebed" strokeWidth="1.500" />
        <g fill="#999" fontSize="37">
          <text x="26" y="45">33.18</text>
          <text x="26" y="219">26.35</text>
          <text x="26" y="412">19.52</text>
          <text x="26" y="606">12.69</text>
        </g>
        {candles.map((c, i) => (
          <g key={i} stroke={c.up ? "#cf5a52" : "#4aa46c"}>
            <line x1={c.x} x2={c.x} y1={c.hi} y2={c.lo} strokeWidth={c.up ? 1.2 : 1.8} />
            {c.up ? (
              <line x1={c.x} x2={c.x} y1={c.lo - (c.lo - c.hi) * 0.2} y2={c.lo} strokeWidth="2" />
            ) : (
              <line x1={c.x} x2={c.x} y1={c.hi + (c.lo - c.hi) * 0.25} y2={c.lo} strokeWidth="2.4" />
            )}
          </g>
        ))}
        {movingAverages.map((s) => (
          <polyline key={s.color} points={toPoints(s.strips, 3)} fill="none" stroke={s.color} strokeWidth="3.2" strokeLinejoin="round" />
        ))}
        <text x="169" y="737" fontSize="38" fill="#d5483f">q</text>
        <path d="M17 270.500 H1063" stroke="#5685cb" strokeWidth="3" />
        <rect x="957" y="252" width="106" height="36" rx="18" fill="#4f85e2" />
        <text x="1010" y="281" fontSize="31" fill="#fff" textAnchor="middle">24.10</text>
        <g fill="#f7f9fb" stroke="#4f87c6" strokeWidth="3">
          <rect x="307.500" y="14.500" width="100" height="33" rx="16.500" />
          <rect x="17.500" y="753" width="81" height="33" rx="16.500" />
        </g>
        <g fill="#4f87c6" fontSize="33" textAnchor="middle">
          <text x="357.500" y="43">31.91</text>
          <text x="58.500" y="781">7.13</text>
        </g>
        <circle cx="409.500" cy="49" r="6" fill="#4a8ad8" />
        <circle cx="96" cy="751" r="6" fill="#4a8ad8" />
      </svg>
      <button aria-label="展开" className="absolute left-[7.8%] top-[89.3%] flex h-[72px] w-[72px] -translate-x-1/2 -translate-y-1/2 items-center justify-center rounded-full bg-[#84a8e8]/45">
        <svg className="h-6 w-6" viewBox="0 0 24 24" fill="none" stroke="#fff" strokeWidth="2.500">
          <path d="M1 2 L11 12 L1 22 M12 2 L22 12 L12 22" />
        </svg>
      </button>
      <button aria-label="全屏" className="absolute left-[52.2%] top-[89.3%] flex h-[72px] w-[72px] -translate-x-1/2 -translate-y-1/2 items-center justify-center rounded-full bg-[#c5daf3]">
        <svg className="h-8 w-8" viewBox="0 0 32 32" fill="none" stroke="#f3f8fe" strokeWidth="3">
          <path d="M1.500 16 V1.500 H16 M30.500 16 V30.500 H16" />
          <path d="M7 7 L25 25" strokeWidth="1.500" strokeDasharray="9 2 2 2" />
        </svg>
      </button>
      <span className="absolute left-[17.5%] top-[33.3%] z-20 h-[20px] w-[20px] -translate-x-1/2 -translate-y-1/2 rounded-full border-2 border-white bg-[#dc4a3e]" />
    </div>
  );
}

function IndicatorHeader({ name, children }: { name: string; children: React.ReactNode }) {
  return (
    <div className="flex h-12 items-start whitespace-nowrap text-[34px] leading-none text-[#444]">
      <button className="flex h-[46px] items-center rounded-lg bg-[#f8f8f8] pr-3">
        <span className="min-w-[110px] px-2 text-[35px]">{name}</span>
        <Help />
      </button>
      <div className="ml-[25px] flex h-[46px] items-center gap-[10px]">{children}</div>
    </div>
  );
}

function LinePanel({ series, top, label }: { series: { color: string; strips: Strip[] }[]; top: number; label: string }) {
  return (
    <svg className="mb-[2px] block h-auto w-full" viewBox={`17 ${top} 1046 214`} role="img" aria-label={label}>
      <rect x="18" y={top + 1} width="1044" height="212" fill="none" stroke="#ebebed" strokeWidth="2" />
      {series.map((s) => (
        <polyline key={s.color} points={toPoints(s.strips, 2.8)} fill="none" stroke={s.color} strokeWidth="3" strokeLinejoin="miter" />
      ))}
    </svg>
  );
}

function VolumePanel() {
  return (
    <svg className="block h-auto w-full" viewBox="17 57 1046 144" role="img" aria-label="成交额">
      <path d="M18 202 V58 H1062 V202" fill="none" stroke="#ebebed" strokeWidth="2" />
      {volumeBars.map((b) => (
        <line key={b.x} x1={b.x} x2={b.x} y1={b.top} y2="202" stroke={b.up ? "#c9605a" : "#4aa46c"} strokeWidth="2.2" />
      ))}
      {volumeLines.map((l, i) => (
        <polyline key={i} points={toPoints([{ half: 0, pts: l.pts }], 3, VX)} fill="none" stroke={l.color} strokeWidth="3" />
      ))}
    </svg>
  );
}

function TradeBar() {
  return (
    <footer className="flex h-[149px] whitespace-nowrap border-t-2 border-[#e4e4e6] leading-none">
      <a href="#index" className="w-[302px] shrink-0 border-r-2 border-[#e9e9eb] pl-[31px] pt-5 text-[43px] text-[#cf4b43]">
        <span className="flex h-14 items-center gap-6">
          4162.88
          <svg className="h-[22px] w-[30px]" viewBox="0 0 30 22" fill="#999">
            <path d="M15 0 L30 22 H0 Z" />
          </svg>
        </span>
        <span className="flex h-14 items-center gap-4">
          <span className="text-[35px] text-[#15151f]">上证</span>
          +0.39%
        </span>
      </a>
      <div className="flex flex-1 items-center px-[41px] text-[56px] font-medium">
        {["买", "卖", "撤"].map((t) => (
          <button key={t} className="flex flex-[148] justify-center">
            <span className="bg-[linear-gradient(135deg,#55565f_73%,#9c9ca0_73%)] bg-clip-text leading-[60px] text-transparent">{t}</span>
          </button>
        ))}
        <button aria-label="收起" className="flex flex-[148] justify-center">
          <svg className="h-[58px] w-[58px]" viewBox="0 0 58 58">
            <rect x="2" y="2" width="54" height="54" rx="12" fill="none" stroke="#55565f" strokeWidth="3" />
            <rect x="11" y="26" width="36" height="6" fill="#55565f" />
          </svg>
        </button>
        <button aria-label="更多" className="flex flex-[104] justify-center">
          <svg className="h-4 w-16" viewBox="0 0 64 16" fill="#55565f">
            <circle cx="8" cy="8" r="8" />
            <circle cx="32" cy="8" r="8" />
            <circle cx="56" cy="8" r="8" />
          </svg>
        </button>
      </div>
    </footer>
  );
}

export default function App() {
  return (
    <div className="min-h-screen bg-[#fefefe] font-[Roboto,'Noto_Sans_CJK_SC',sans-serif]">
      <StatusBar />
      <Header />
      <Quote />
      <div className="mx-[45px] -mt-[1px] h-[3px] bg-[#eeeeef]" />
      <Sectors />
      <div className="h-[9px] bg-[#f2f3f8]" />
      <Tabs />
      <main className="px-[16px]">
        <Averages />
        <div className="relative">
          <PriceChart />
          <div className="relative flex h-12 items-center justify-between text-[30px] leading-none text-[#8a8a8f]">
            <span>2</span>
            <span>2026/02/27</span>
            <button className="absolute left-[10px] top-[1px] z-20 h-12 whitespace-nowrap rounded-[20px] bg-[#4f85e2] px-4 text-[31px] text-white">
              2025/06/23 查看分时 &gt;
            </button>
          </div>
          <div className="h-[2px] bg-[#eeeeef]" />
          <IndicatorHeader name="RSI">
            <span>RSI(6,12,24):</span>
            <span className="text-[#555]">6:81.95</span>
            <span className="text-[#c34e41]">12:80.36</span>
            <span className="text-[#dfa046]">24:76.80</span>
          </IndicatorHeader>
          <LinePanel series={rsi} top={59} label="RSI" />
          <IndicatorHeader name="SKDJ">
            <span>SKDJ(9,3,3,5):</span>
            <span className="text-[#555]">K:84.97</span>
            <span className="text-[#c34e41]">D:82.93</span>
          </IndicatorHeader>
          <LinePanel series={skdj} top={323} label="SKDJ" />
          <IndicatorHeader name="成交额">
            <span>额:44.10亿</span>
            <span className="text-[#555]">MA5:41.37亿</span>
            <span className="text-[#c34e41]">MA10:37.13亿</span>
          </IndicatorHeader>
          <VolumePanel />
          <div className="absolute bottom-0 left-[17.4%] top-[2px] z-10 w-[3px] bg-[#5685cb]" />
        </div>
      </main>
      <TradeBar />
    </div>
  );
}
